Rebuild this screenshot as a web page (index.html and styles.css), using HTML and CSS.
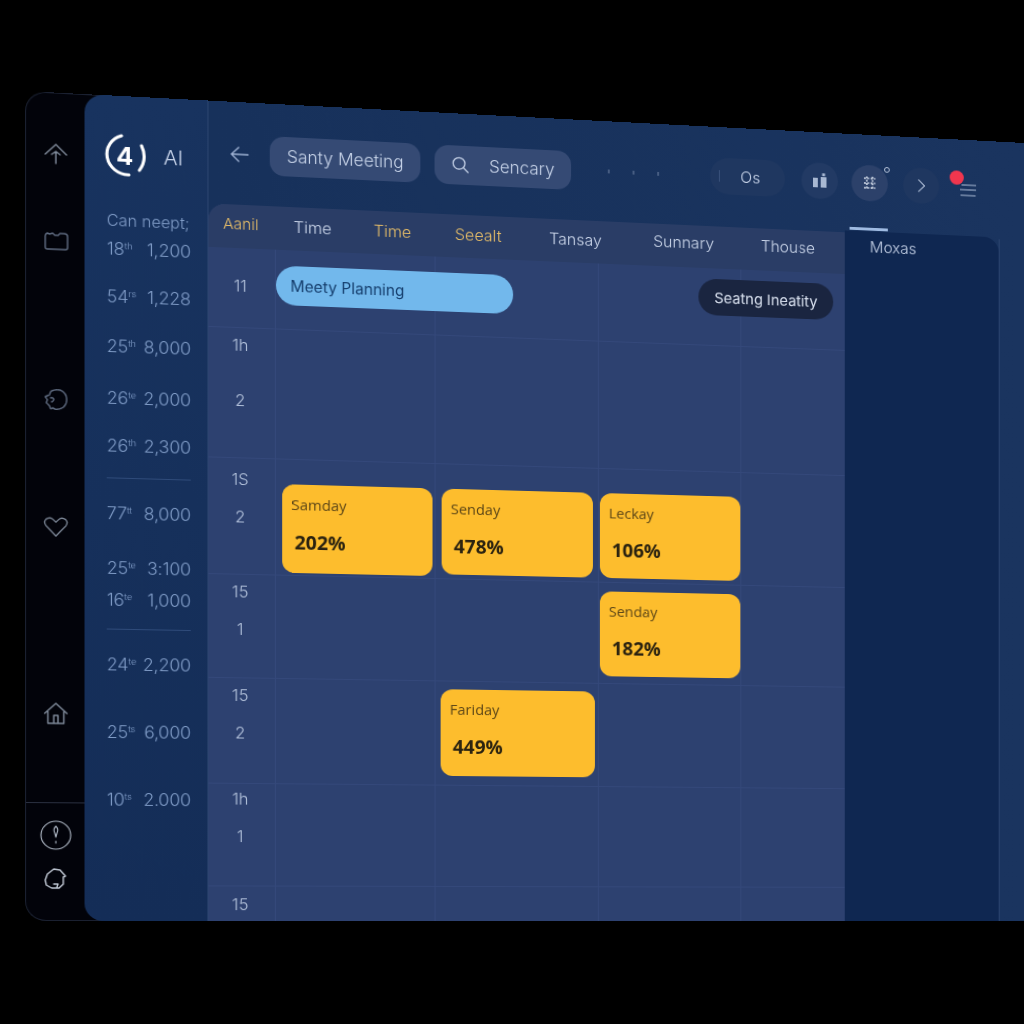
FILE: index.html
```html
<!DOCTYPE html>
<html>
<head>
  <meta charset="utf-8">
  <title>Schedule</title>
  <link rel="stylesheet" href="styles.css">
</head>
<body>
  <div class="window">
    <nav class="rail">
      <svg class="icon" viewBox="0 0 24 24"><path d="M2 13 12 3l10 10M12 22V10M8 13l4-3 4 3"/></svg>
      <svg class="icon dim" viewBox="0 0 24 24"><path d="M2 7q0-2 2-3l2 1 3-1 2 2h3l2-2h4q3 0 3 3v11q0 2-2 2H4q-2 0-2-2z"/></svg>
      <svg class="icon dim dashy" viewBox="0 0 24 24"><path d="M8 3q4-2 8-1 5 2 6 7 1 6-3 10-4 3-8 2l-2-1-2 1-1-3-3-3 1-3-2-3 2-1 2-1 1-3zM7 10q2-1 3 1 0 2-2 3"/></svg>
      <svg class="icon heart" viewBox="0 0 26 24"><path d="M13 22 3 11Q0 7 3 4q4-3 7 0l3 3 3-3q3-3 7 0 3 3 0 7z"/></svg>
      <svg class="icon" viewBox="0 0 24 24"><path d="M1.500 12 12 2l10.500 10M4.500 10v12h15V10M10 22v-8h4v8"/></svg>
      <div class="rail-foot">
        <svg class="icon ring" viewBox="0 0 30 30"><circle cx="15" cy="15" r="14"/><path d="M15 6q3 3 1 7l-1 4-1-4q-2-4 1-7zM15 21v2"/></svg>
        <svg class="icon bright" viewBox="0 0 24 24"><path d="M4 7l6-5 6 1 5 6-2 1v7l-4 4H8l-5-3-1-5zM10 17h4l-1 3"/></svg>
      </div>
    </nav>

    <aside class="sidebar">
      <div class="brand">
        <div class="logo">
          <svg viewBox="0 0 44 44"><path d="M19 2A20 20 0 0 0 26 41"/><path d="M38 11q6 13-2 25"/></svg>
          <span>4</span>
        </div>
        <span class="brand-name">AI</span>
      </div>
      <div class="note">Can neept;</div>
      <div class="stat stat-first"><span>18<sup>th</sup></span><span>1,200</span></div>
      <div class="stat stat-near"><span>54<sup>rs</sup></span><span>1,228</span></div>
      <div class="stat stat-step"><span>25<sup>th</sup></span><span>8,000</span></div>
      <div class="stat stat-wide"><span>26<sup>te</sup></span><span>2,000</span></div>
      <div class="stat stat-near"><span>26<sup>th</sup></span><span>2,300</span></div>
      <div class="rule"></div>
      <div class="stat stat-first"><span>77<sup>tt</sup></span><span>8,000</span></div>
      <div class="stat stat-mid"><span>25<sup>te</sup></span><span>3:100</span></div>
      <div class="stat stat-tight"><span>16<sup>te</sup></span><span>1,000</span></div>
      <div class="rule rule-close"></div>
      <div class="stat stat-first"><span>24<sup>te</sup></span><span>2,200</span></div>
      <div class="stat stat-far"><span>25<sup>ts</sup></span><span>6,000</span></div>
      <div class="stat stat-far"><span>10<sup>ts</sup></span><span>2.000</span></div>
    </aside>

    <main class="main">
      <header class="topbar">
        <svg class="back" viewBox="0 0 20 20"><path d="M18 10H2M9 3l-7 7 7 7"/></svg>
        <div class="pill pill-title">Santy Meeting</div>
        <div class="pill pill-search">
          <svg viewBox="0 0 20 20"><circle cx="8" cy="8" r="6.500"/><path d="M13 13l5 5"/></svg>
          <span>Sencary</span>
        </div>
        <div class="dots"><i></i><i></i><i></i></div>
        <div class="tools">
          <div class="pill pill-short"><b></b>Os</div>
          <div class="round round-a">
            <svg viewBox="0 0 16 16"><path class="solid" d="M1 5h5v10H1zM9 4h6v11H9zM10.500 0h3v3h-3z"/></svg>
          </div>
          <div class="round round-b">
            <svg viewBox="0 0 16 16"><path class="dashed" d="M2 3h12M2 8h12M2 13h12"/><path class="dashed" d="M5 1v14M11 1v14"/></svg>
            <em></em>
          </div>
          <div class="round round-c">
            <svg viewBox="0 0 16 16"><path d="M5 1l7 7-7 7"/></svg>
          </div>
          <div class="menu">
            <span class="alert"></span>
            <svg viewBox="0 0 17 13"><path d="M2 1h15M0 6h17M1 12h15"/></svg>
          </div>
        </div>
      </header>

      <section class="board">
        <div class="schedule">
          <div class="days">
            <span class="gold first">Aanil</span>
            <span>Time</span>
            <span class="gold">Time</span>
            <span class="gold">Seealt</span>
            <span>Tansay</span>
            <span class="high">Sunnary</span>
            <span class="high">Thouse</span>
          </div>

          <div class="row row-1">
            <div class="time time-low"><span>11</span></div>
            <div class="cell"><div class="meeting">Meety Planning</div></div>
            <div class="cell"></div>
            <div class="cell"><div class="tag">Seatng Ineatity</div></div>
            <div class="cell"></div>
          </div>
          <div class="row row-2">
            <div class="time time-apart"><span>1h</span><span>2</span></div>
            <div class="cell"></div>
            <div class="cell"></div>
            <div class="cell"></div>
            <div class="cell"></div>
          </div>
          <div class="row row-3">
            <div class="time time-mid"><span>1S</span><span>2</span></div>
            <div class="cell slot-a"><div class="card"><span>Samday</span><strong>202%</strong></div></div>
            <div class="cell slot-b"><div class="card"><span>Senday</span><strong>478%</strong></div></div>
            <div class="cell slot-c"><div class="card"><span>Leckay</span><strong>106%</strong></div></div>
            <div class="cell"></div>
          </div>
          <div class="row row-4">
            <div class="time"><span>15</span><span>1</span></div>
            <div class="cell"></div>
            <div class="cell"></div>
            <div class="cell slot-d"><div class="card"><span>Senday</span><strong>182%</strong></div></div>
            <div class="cell"></div>
          </div>
          <div class="row row-5">
            <div class="time"><span>15</span><span>2</span></div>
            <div class="cell"></div>
            <div class="cell slot-e"><div class="card"><span>Fariday</span><strong>449%</strong></div></div>
            <div class="cell"></div>
            <div class="cell"></div>
          </div>
          <div class="row row-6">
            <div class="time time-top"><span>1h</span><span>1</span></div>
            <div class="cell"></div>
            <div class="cell"></div>
            <div class="cell"></div>
            <div class="cell"></div>
          </div>
          <div class="row row-7">
            <div class="time time-end"><span>15</span></div>
            <div class="cell"></div>
            <div class="cell"></div>
            <div class="cell"></div>
            <div class="cell"></div>
          </div>
        </div>

        <div class="side">
          <span class="side-tick"></span>
          Moxas
        </div>
      </section>
    </main>
  </div>
</body>
</html>
```

FILE: styles.css
```css
html, body {
  margin: 0;
  height: 1024px;
  overflow: hidden;
  background: #000;
}
body {
  padding: 91px 0 0 25px;
  box-sizing: border-box;
  font-family: Inter, "Liberation Sans", sans-serif;
}

/* the whole window is laid out flat, then tilted away to the right */
.window {
  display: flex;
  width: 1001px;
  height: 830px;
  transform-origin: 0 0;
  transform: matrix3d(1.06684, 0.05548, 0, 0.00006684, 0, 1, 0, 0, 0, 0, 1, 0, 0, 0, 0, 1);
}

svg {
  fill: none;
  stroke: currentColor;
  stroke-width: 1.4;
  stroke-linecap: round;
  stroke-linejoin: round;
}

/* rail */
.rail {
  width: 75px;
  flex: none;
  box-sizing: border-box;
  margin-right: -19px;
  padding: 48px 19px 0 0;
  background: #02030a;
  border: 1px solid #1a2030;
  border-right: 0;
  border-radius: 20px 0 0 20px;
  display: flex;
  flex-direction: column;
  align-items: center;
  color: #7e8999;
}
.icon {
  width: 24px;
  height: 24px;
  flex: none;
  margin-bottom: 64px;
}
.icon.dim { color: #5f6b80; }
.icon.dashy { stroke-dasharray: 5 1; }
.icon:nth-child(2) { margin-bottom: 135px; }
.icon:nth-child(3) { margin-bottom: 103px; }
.icon.heart { margin-bottom: 163px; }
.icon:nth-child(5) { margin-bottom: 77px; }
.rail-foot {
  align-self: stretch;
  margin-right: -19px;
  padding: 17px 19px 0 0;
  border-top: 1px solid #2a3040;
  display: flex;
  flex-direction: column;
  align-items: center;
}
.rail-foot .icon { margin: 0; }
.icon.ring {
  width: 30px;
  height: 30px;
  margin-bottom: 17px;
  color: #a9b2bf;
  stroke-width: 1.1;
}
.icon.bright { color: #c0c8d4; }

/* sidebar */
.sidebar {
  width: 117px;
  flex: none;
  box-sizing: border-box;
  padding: 38px 16px 0 21px;
  background: linear-gradient(180deg, #18335f, #142d57);
  border-radius: 18px 0 0 18px;
  color: #7f9bc6;
  font-size: 17.500px;
  font-weight: 300;
  position: relative;
}
.brand {
  display: flex;
  align-items: center;
  height: 44px;
  margin-left: -5px;
  color: #fff;
}
.logo {
  display: grid;
  width: 44px;
  height: 44px;
  place-items: center;
}
.logo > * { grid-area: 1 / 1; }
.logo svg {
  width: 44px;
  height: 44px;
  stroke-width: 3;
}
.logo span {
  font-size: 24px;
  font-weight: 700;
}
.brand-name {
  margin-left: 15px;
  font-size: 20px;
  font-weight: 300;
  color: #c8d4ea;
}
.note {
  margin-top: 32px;
  height: 24px;
  line-height: 24px;
  font-size: 15.500px;
  white-space: nowrap;
}
.stat {
  display: flex;
  justify-content: space-between;
  height: 24px;
  line-height: 24px;
  font-size: 17px;
  letter-spacing: -0.2px;
}
.stat sup {
  font-size: 9px;
  line-height: 0;
  vertical-align: 6px;
}
.stat-first { margin-top: 4px; }
.rule + .stat-first { margin-top: 0; }
.stat-near { margin-top: 24px; }
.stat-step { margin-top: 26px; }
.stat-wide { margin-top: 28px; }
.stat-mid { margin-top: 31px; }
.stat-tight { margin-top: 8px; }
.stat-far { margin-top: 44px; }
.rule {
  height: 1px;
  margin: 20px 0 23px;
  background: #2f4b7a;
}
.rule-close { margin-top: 17px; }

/* main */
.main {
  flex: 1;
  display: flex;
  flex-direction: column;
  min-width: 0;
  background: linear-gradient(90deg, #17315b, #1a345f);
  border-left: 1px solid #2c4570;
}
.topbar {
  height: 104px;
  flex: none;
  box-sizing: border-box;
  padding: 2px 53px 0 20px;
  display: flex;
  align-items: center;
  color: #c9d5ea;
}
.back {
  width: 20px;
  height: 20px;
  margin-right: 19px;
  flex: none;
  color: #9fb2d3;
}
.pill {
  height: 40px;
  box-sizing: border-box;
  display: flex;
  align-items: center;
  background: #354a74;
  border-radius: 14px;
  font-size: 17px;
  font-weight: 300;
  flex: none;
}
.pill-title {
  width: 147px;
  justify-content: center;
}
.pill-search {
  width: 136px;
  margin-left: 14px;
  padding-left: 17px;
}
.pill-search svg {
  width: 18px;
  height: 18px;
  margin-right: 19px;
}
.dots {
  display: flex;
  gap: 23px;
  margin-left: 37px;
  margin-bottom: 2px;
}
.dots i {
  width: 2px;
  height: 4px;
  background: #475d82;
}
.tools {
  margin-left: auto;
  margin-bottom: 4px;
  display: flex;
  align-items: center;
}
.pill-short {
  width: 77px;
  height: 38px;
  padding-left: 9px;
  background: #1f3760;
  border-radius: 19px;
  font-size: 16px;
  gap: 21px;
}
.pill-short b {
  width: 1px;
  height: 12px;
  background: #3a527c;
}
.round {
  width: 38px;
  height: 38px;
  display: grid;
  place-items: center;
  border-radius: 50%;
  position: relative;
}
.round svg {
  width: 16px;
  height: 16px;
}
.round-a {
  margin-left: 17px;
  background: #223a64;
}
.round .solid {
  fill: #a8b8d2;
  stroke: none;
}
.round-b {
  margin-left: 14px;
  background: #2c416a;
}
.round .dashed {
  stroke: #d4dcea;
  stroke-width: 1.6;
  stroke-linecap: butt;
  stroke-dasharray: 2 1.500;
}
.round-b em {
  position: absolute;
  top: 1px;
  right: -2px;
  width: 4px;
  height: 4px;
  border: 1px solid #b9c6dc;
  border-radius: 50%;
}
.round-c {
  margin-left: 16px;
  background: #1f3760;
  color: #a6b6d0;
}
.round-c svg { width: 14px; height: 22px; }
.menu {
  margin: 4px 0 0 22px;
  width: 17px;
  height: 13px;
  position: relative;
  color: #8093b3;
}
.menu svg {
  display: block;
  width: 17px;
  height: 13px;
}
.alert {
  position: absolute;
  top: -14px;
  left: -11px;
  width: 15px;
  height: 15px;
  border-radius: 50%;
  background: #f0364e;
}

/* schedule */
.board {
  flex: 1;
  display: flex;
  min-height: 0;
  margin-right: 28px;
  border-right: 1px solid #2c4570;
}
.schedule {
  width: 636px;
  flex: none;
  background: #2d4170;
  border-radius: 16px 0 0 0;
  display: flex;
  flex-direction: column;
}
.days {
  height: 44px;
  flex: none;
  box-sizing: border-box;
  padding: 0 0 5px 14px;
  background: #2a3d66;
  border-radius: 16px 0 0 0;
  display: grid;
  grid-template-columns: 68px 78px 80px 94px 105px 110px 1fr;
  align-items: center;
  color: #cbd6ea;
  font-size: 16px;
  font-weight: 300;
}
.days .gold { color: #e6bd68; }
.days .first { font-size: 15px; }
.days .high { margin-bottom: 4px; }
.row {
  display: grid;
  grid-template-columns: 64px 156px 163px 145px 1fr;
  border-bottom: 1px solid #34487a;
  box-sizing: border-box;
}
.row-1 { height: 81px; }
.row-2 { height: 132px; }
.row-3 { height: 118px; }
.row-4 { height: 105px; }
.row-5 { height: 107px; }
.row-6 { height: 104px; }
.row-7 { flex: 1; border-bottom: 0; }

.time {
  padding: 5px 3px 0 0;
  display: flex;
  flex-direction: column;
  align-items: center;
  gap: 14px;
  color: #b4c3dc;
  font-size: 16px;
  font-weight: 300;
}
.time span { line-height: 24px; }
.time-low { padding-top: 26px; }
.time-apart { gap: 32px; }
.time-mid { padding-top: 9px; }
.time-top { padding-top: 3px; }
.time-end { padding-top: 6px; }

.cell {
  border-left: 1px solid #34487a;
  box-sizing: border-box;
  display: flex;
  min-width: 0;
}
.slot-a { padding: 25px 2px 2px 6px; }
.slot-b { padding: 25px 5px 4px 6px; }
.slot-c { padding: 25px 0 4px 1px; }
.slot-d { padding: 9px 0 7px 1px; }
.slot-e { padding: 8px 3px 9px 5px; }

.card {
  flex: 1;
  box-sizing: border-box;
  padding: 11px 9px 0;
  background: #fdbd2d;
  border-radius: 12px;
  display: flex;
  flex-direction: column;
  color: #5c4617;
  font-family: "Open Sans", sans-serif;
  font-size: 14.500px;
}
.card span { line-height: 20px; }
.card strong {
  margin: 15px 0 0 3px;
  line-height: 26px;
  color: #2a2210;
  font-size: 19px;
  font-weight: 700;
}
.meeting {
  position: relative;
  flex: none;
  width: 233px;
  height: 40px;
  margin-top: 16px;
  padding-left: 14px;
  box-sizing: border-box;
  display: flex;
  align-items: center;
  background: #72b8ec;
  border-radius: 20px;
  color: #163f6e;
  font-size: 15.200px;
}
.tag {
  position: relative;
  flex: none;
  width: 139px;
  height: 38px;
  margin: 11px 0 0 101px;
  display: flex;
  align-items: center;
  justify-content: center;
  background: #1a2540;
  border-radius: 19px;
  color: #d8e0ee;
  font-size: 15px;
  white-space: nowrap;
}

/* side panel */
.side {
  flex: 1;
  position: relative;
  box-sizing: border-box;
  margin-top: -2px;
  padding: 4px 0 0 26px;
  line-height: 24px;
  background: #0f2751;
  border-radius: 0 16px 0 0;
  color: #c5d1e6;
  font-size: 16px;
  font-weight: 300;
}
.side-tick {
  position: absolute;
  top: -4px;
  left: 5px;
  width: 40px;
  height: 3px;
  background: #9fbbe2;
}
```
